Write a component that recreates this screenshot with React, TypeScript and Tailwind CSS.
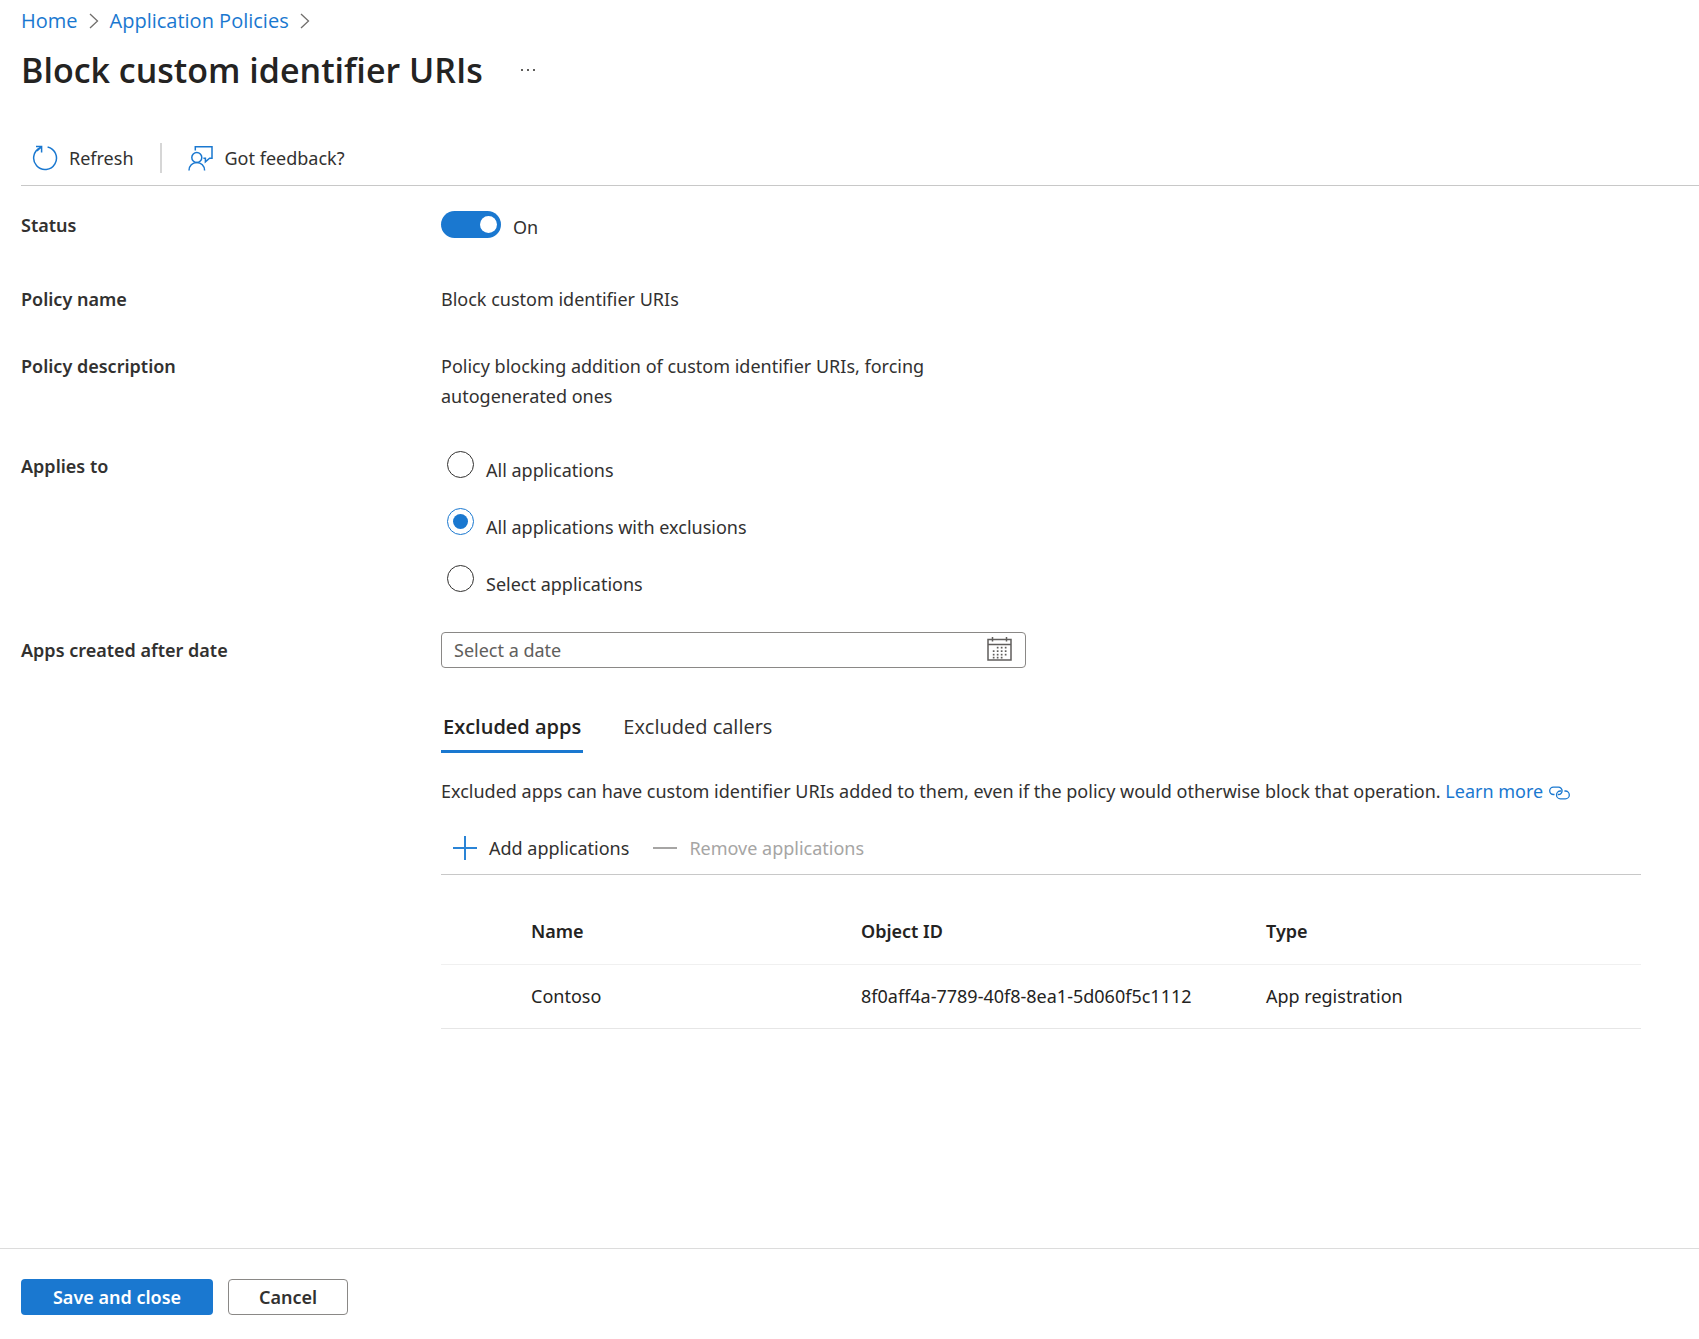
import { useState } from "react";

function Chevron() {
  return (
    <svg width="10" height="16" viewBox="0 0 10 16" fill="none" stroke="#706e6c" strokeWidth="1.3" aria-hidden="true">
      <path d="M1 1l7.5 7L1 15" />
    </svg>
  );
}

function RefreshIcon() {
  return (
    <svg width="26" height="26" viewBox="0 0 26 26" fill="none" stroke="#1a78d0" strokeWidth="1.5" aria-hidden="true">
      <path d="M15.6 2A11.4 11.4 0 1 1 8.2 2.8" />
      <path d="M4 1.6h5.6v5.8" />
      <path d="M9.4 1.8L5 6" />
    </svg>
  );
}

function FeedbackIcon() {
  return (
    <svg width="26" height="26" viewBox="0 0 26 26" fill="none" stroke="#1a78d0" strokeWidth="1.5" aria-hidden="true">
      <circle cx="8.8" cy="12.5" r="5" />
      <path d="M1 25.4c0-4.4 3.4-7.9 7.8-7.9s7.8 3.5 7.8 7.9" />
      <path d="M7.3 5.4V1.8H24v11.4h-2.4l-4.2 3.6v-3.6h-2" />
    </svg>
  );
}

function CalendarIcon() {
  const dots = [
    [10, 11], [14, 11], [18, 11],
    [6, 14.5], [10, 14.5], [14, 14.5], [18, 14.5],
    [6, 18], [10, 18], [14, 18], [18, 18],
    [6, 21], [10, 21], [14, 21],
  ];
  return (
    <svg width="25" height="26" viewBox="0 0 25 26" fill="none" stroke="#605e5c" strokeWidth="1.5" aria-hidden="true">
      <path d="M1 2.5h23v20.5H1zM1 7.5h23M5.5 0v4.5M19.5 0v4.5" />
      {dots.map(([x, y]) => (
        <rect key={`${x}-${y}`} x={x - 0.2} y={y - 1.2} width="1.7" height="1.7" fill="#605e5c" stroke="none" />
      ))}
    </svg>
  );
}

function LinkIcon() {
  return (
    <svg className="ml-1.5 inline-block" width="21" height="14" viewBox="0 0 21 14" fill="none" stroke="#1a78d0" strokeWidth="1.3" aria-hidden="true">
      <path d="M5.5 8.5H4.4A3.7 3.7 0 0 1 4.4 1.1h5a3.7 3.7 0 0 1 0 7.4h-.6" />
      <path d="M15.4 5h1a3.9 3.9 0 0 1 0 7.8h-5a3.9 3.9 0 0 1 0-7.8h.9" />
    </svg>
  );
}

function PlusIcon() {
  return (
    <svg width="24" height="24" viewBox="0 0 24 24" stroke="#2a84d6" strokeWidth="2" aria-hidden="true">
      <path d="M12 0v24M0 12h24" />
    </svg>
  );
}

function MinusIcon() {
  return (
    <svg width="24" height="24" viewBox="0 0 24 24" stroke="#a6a5a4" strokeWidth="2" aria-hidden="true">
      <path d="M0 12h24" />
    </svg>
  );
}

const scopes = ["All applications", "All applications with exclusions", "Select applications"];
const tabs = ["Excluded apps", "Excluded callers"];

export default function App() {
  const [on, setOn] = useState(true);
  const [scope, setScope] = useState(scopes[1]);
  const [tab, setTab] = useState(tabs[0]);

  return (
    <div className="flex min-h-screen flex-col bg-white font-['Noto_Sans','Open_Sans',sans-serif] text-[18px] leading-[30px] text-[#323130]">
      <header className="pl-[21px]">
        <nav aria-label="Breadcrumb" className="flex h-[42px] items-center gap-[11px] font-['Open_Sans','Noto_Sans',sans-serif] text-[20px] text-[#1a78d0]">
          <a href="#home">Home</a>
          <Chevron />
          <a href="#policies">Application Policies</a>
          <Chevron />
        </nav>
        <div className="flex h-14 items-center gap-[38px]">
          <h1 className="font-['Open_Sans','Noto_Sans',sans-serif] text-[34px] font-semibold text-[#242322]">Block custom identifier URIs</h1>
          <button type="button" aria-label="More" className="flex gap-1">
            <span className="size-0.5 bg-[#605e5c]" />
            <span className="size-0.5 bg-[#605e5c]" />
            <span className="size-0.5 bg-[#605e5c]" />
          </button>
        </div>
        <div className="mt-8 flex h-14 items-center border-b border-[#c8c8c8] pl-[11px]">
          <button type="button" className="flex items-center gap-[11px]">
            <RefreshIcon />
            Refresh
          </button>
          <div className="mx-[26px] h-[30px] w-0.5 bg-[#d6d6d6]" />
          <button type="button" className="flex items-center gap-[11px]">
            <FeedbackIcon />
            Got feedback?
          </button>
        </div>
      </header>

      <main className="grid flex-1 grid-cols-[420px_1fr] content-start pt-6 pr-[58px] pl-[21px]">
        <span id="status-label" className="font-semibold">Status</span>
        <div className="flex h-[74px] items-start gap-3">
          <button
            type="button"
            role="switch"
            aria-checked={on}
            aria-labelledby="status-label"
            onClick={() => setOn(!on)}
            className={`mt-px flex h-[27px] w-[60px] items-center rounded-full px-1 ${on ? "justify-end bg-[#1a78d0]" : "justify-start bg-[#8a8886]"}`}
          >
            <span className="size-[17px] rounded-full bg-white" />
          </button>
          <span className="mt-0.5">{on ? "On" : "Off"}</span>
        </div>

        <span className="font-semibold">Policy name</span>
        <p className="pb-[37px]">Block custom identifier URIs</p>

        <span className="font-semibold">Policy description</span>
        <p className="max-w-[540px] pb-10">Policy blocking addition of custom identifier URIs, forcing autogenerated ones</p>

        <span id="scope-label" className="font-semibold">Applies to</span>
        <div role="radiogroup" aria-labelledby="scope-label" className="pb-[10px] pl-1.5">
          {scopes.map((item) => (
            <label key={item} className="flex h-[57px] items-start gap-3">
              <input
                type="radio"
                name="scope"
                checked={scope === item}
                onChange={() => setScope(item)}
                className="size-[27px] shrink-0 appearance-none rounded-full border border-[#323130] bg-white bg-clip-content p-[5px] checked:border-[#1a78d0] checked:bg-[#1a78d0]"
              />
              <span className="mt-1">{item}</span>
            </label>
          ))}
        </div>

        <label htmlFor="created-after" className="pt-[3px] font-semibold">Apps created after date</label>
        <div className="flex h-9 w-full max-w-[585px] items-center rounded-sm border border-[#8a8886] pr-[13px] pl-3">
          <input
            id="created-after"
            type="text"
            placeholder="Select a date"
            className="min-w-0 flex-1 outline-none placeholder:text-[#605e5c]"
          />
          <button type="button" aria-label="Open calendar">
            <CalendarIcon />
          </button>
        </div>

        <section className="col-start-2 mt-11">
          <div role="tablist" className="flex gap-[38px]">
            {tabs.map((item) => (
              <button
                key={item}
                type="button"
                role="tab"
                aria-selected={tab === item}
                onClick={() => setTab(item)}
                className={`h-[41px] border-b-3 px-0.5 pb-2 font-['Open_Sans','Noto_Sans',sans-serif] text-[20px] ${tab === item ? "border-[#1a78d0] font-semibold text-[#242322]" : "border-transparent"}`}
              >
                {item}
              </button>
            ))}
          </div>
          <p className="mt-[23px]">
            Excluded apps can have custom identifier URIs added to them, even if the policy would otherwise block that operation.{" "}
            <a href="#learn-more" className="text-[#1a78d0]">
              Learn more
              <LinkIcon />
            </a>
          </p>
          <div className="mt-[15px] flex h-[54px] items-center gap-6 border-b border-[#c8c8c8] pl-3">
            <button type="button" className="flex items-center gap-3">
              <PlusIcon />
              Add applications
            </button>
            <button type="button" disabled className="flex items-center gap-3 text-[#a6a5a4]">
              <MinusIcon />
              Remove applications
            </button>
          </div>
          <table className="mt-6 w-full table-fixed border-collapse text-left text-[#242322]">
            <thead>
              <tr className="h-[65px] border-b border-[#f0f0f0]">
                <td className="w-[90px]" />
                <th scope="col" className="w-[330px] font-semibold">Name</th>
                <th scope="col" className="w-[405px] font-semibold">Object ID</th>
                <th scope="col" className="font-semibold">Type</th>
              </tr>
            </thead>
            <tbody>
              <tr className="h-16 border-b border-[#e6e6e6]">
                <td />
                <td>Contoso</td>
                <td>8f0aff4a-7789-40f8-8ea1-5d060f5c1112</td>
                <td>App registration</td>
              </tr>
            </tbody>
          </table>
        </section>
      </main>

      <footer className="flex gap-[15px] border-t border-[#dcdcdc] px-[21px] pt-[30px] pb-6 font-semibold">
        <button type="button" className="h-9 min-w-48 rounded-sm bg-[#1a78d0] px-5 text-white">Save and close</button>
        <button type="button" className="h-9 min-w-[120px] rounded-sm border border-[#8a8886] px-5">Cancel</button>
      </footer>
    </div>
  );
}
